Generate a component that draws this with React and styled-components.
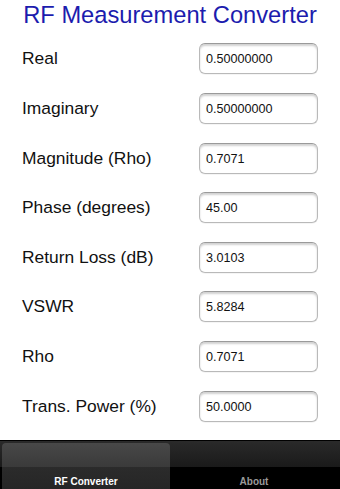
import React from "react";
import styled, { createGlobalStyle } from "styled-components";

const GlobalStyle = createGlobalStyle`
  html, body {
    margin: 0;
    padding: 0;
    background: #ffffff;
  }
  body {
    font-family: "Liberation Sans", Arial, sans-serif;
  }
`;

const Screen = styled.div`
  width: 340px;
  height: 489px;
  display: flex;
  flex-direction: column;
  background: #ffffff;
  overflow: hidden;
`;

const Title = styled.h1`
  margin: 0;
  padding-top: 1px;
  height: 31px;
  font-size: 23.7px;
  font-weight: normal;
  color: #1c1cae;
  text-align: center;
  line-height: 28px;
`;

const Form = styled.div`
  flex: 1;
  display: flex;
  flex-direction: column;
  padding-top: 14px;
`;

const Row = styled.div`
  height: 49.6px;
  display: flex;
  align-items: flex-start;
  justify-content: space-between;
  padding: 0 22px 0 22px;
  box-sizing: border-box;
`;

const Label = styled.span`
  font-size: 17.4px;
  color: #111111;
  line-height: 31px;
  margin-top: 0;
`;

const Field = styled.div`
  width: 119px;
  height: 31px;
  box-sizing: border-box;
  border: 1px solid #b9b9b9;
  border-top-color: #9a9a9a;
  border-radius: 6px;
  background: #ffffff;
  box-shadow: inset 0 2px 2px rgba(0, 0, 0, 0.18), 0 1px 0 rgba(0, 0, 0, 0.04);
  padding-left: 6px;
  font-size: 12.6px;
  color: #111111;
  line-height: 30px;
`;

const TabBar = styled.div`
  height: 53px;
  display: flex;
  padding: 2px 2px 0 2px;
  box-sizing: border-box;
  border-top: 1px solid #000;
  background: linear-gradient(
    to bottom,
    #2a2a2a 0px,
    #1a1a1a 26px,
    #000000 26px,
    #000000 100%
  );
`;

const Tab = styled.div`
  flex: 1;
  display: flex;
  align-items: flex-end;
  justify-content: center;
  padding-bottom: 2px;
  border-radius: 4px 4px 0 0;
  font-size: 10px;
  font-weight: bold;
  color: ${(p) => (p.active ? "#ffffff" : "#9a9a9a")};
  background: ${(p) =>
    p.active
      ? "linear-gradient(to bottom, #484848 0px, #3a3a3a 24px, #2b2b2b 24px, #262626 100%)"
      : "transparent"};
`;

const rows = [
  ["Real", "0.50000000"],
  ["Imaginary", "0.50000000"],
  ["Magnitude (Rho)", "0.7071"],
  ["Phase (degrees)", "45.00"],
  ["Return Loss (dB)", "3.0103"],
  ["VSWR", "5.8284"],
  ["Rho", "0.7071"],
  ["Trans. Power (%)", "50.0000"],
];

export default function App() {
  return (
    <>
      <GlobalStyle />
      <Screen>
        <Title>RF Measurement Converter</Title>
        <Form>
          {rows.map(([label, value]) => (
            <Row key={label}>
              <Label>{label}</Label>
              <Field>{value}</Field>
            </Row>
          ))}
        </Form>
        <TabBar>
          <Tab active>RF Converter</Tab>
          <Tab>About</Tab>
        </TabBar>
      </Screen>
    </>
  );
}
